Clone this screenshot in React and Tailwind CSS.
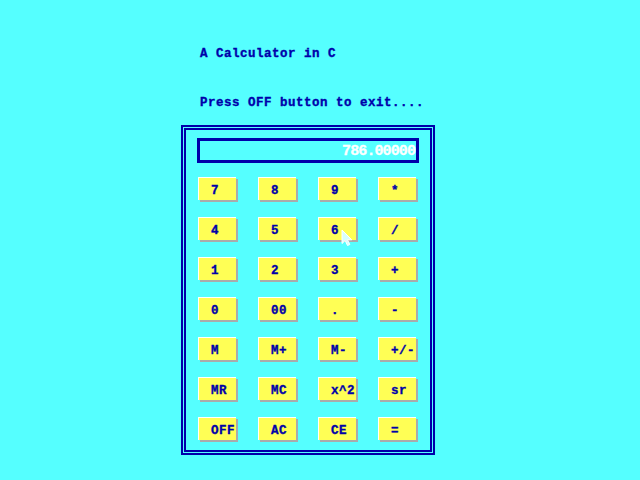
const keys = [
  ['7', '8', '9', '*'],
  ['4', '5', '6', '/'],
  ['1', '2', '3', '+'],
  ['0', '00', '.', '-'],
  ['M', 'M+', 'M-', '+/-'],
  ['MR', 'MC', 'x^2', 'sr'],
  ['OFF', 'AC', 'CE', '='],
]

function Key({ label }) {
  return (
    <div className="w-[40px] h-[25px]">
      <div className="w-[38px] h-[23px] bg-[#FFFF55] border-l border-t border-white shadow-[2px_2px_0_#AAAAAA] pl-[12px] pt-[7px] text-[12.5px] leading-[12px] tracking-[0.5px] font-bold text-[#0000AA] [-webkit-text-stroke:0.35px_#0000AA] whitespace-pre">
        {label}
      </div>
    </div>
  )
}

export default function App() {
  return (
    <div className="relative w-[640px] h-[480px] bg-[#55FFFF] overflow-hidden font-['Liberation_Mono',monospace] pt-[46px]">
      {/* header lines */}
      <div className="ml-[200px] h-4 text-[12.5px] leading-[16px] tracking-[0.5px] font-bold text-[#0000AA] [-webkit-text-stroke:0.35px_#0000AA] whitespace-pre">
        A Calculator in C
      </div>
      <div className="ml-[200px] mt-[33px] h-4 text-[12.5px] leading-[16px] tracking-[0.5px] font-bold text-[#0000AA] [-webkit-text-stroke:0.35px_#0000AA] whitespace-pre">
        Press OFF button to exit....
      </div>

      {/* calculator body */}
      <div className="ml-[181px] mt-[14px] w-[254px] h-[330px] border-2 border-[#0000AA] p-px">
        <div className="h-full border-2 border-[#0000AA] pl-[11px] pt-[8px]">
          <div className="w-[222px] h-[25px] border-[3px] border-[#0000AA] flex items-center justify-end pr-px pt-px">
            <span className="text-[15px] leading-[15px] tracking-[-0.9px] font-bold text-white [-webkit-text-stroke:0.3px_#FFFFFF]">786.00000</span>
          </div>
          <div className="ml-px mt-[14px] grid grid-cols-[40px_40px_40px_40px] gap-x-[20px] gap-y-[15px]">
            {keys.flat().map((k, i) => (
              <Key key={i} label={k} />
            ))}
          </div>
        </div>
      </div>

      {/* mouse pointer */}
      <svg className="absolute left-[341px] top-[229px]" width="13" height="18" viewBox="0 0 13 18">
        <path d="M1 1 L1 14.5 L4.2 11.5 L6.5 16.5 L8.8 15.5 L6.5 10.8 L10.8 10.8 Z" fill="#D8FFFF" stroke="#FFFFFF" strokeWidth="1" />
      </svg>
    </div>
  )
}
